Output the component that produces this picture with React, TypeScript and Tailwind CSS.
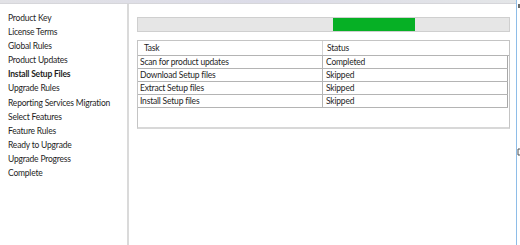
const steps = [
  "Product Key",
  "License Terms",
  "Global Rules",
  "Product Updates",
  "Install Setup Files",
  "Upgrade Rules",
  "Reporting Services Migration",
  "Select Features",
  "Feature Rules",
  "Ready to Upgrade",
  "Upgrade Progress",
  "Complete",
];

const tasks = [
  { task: "Scan for product updates", status: "Completed" },
  { task: "Download Setup files", status: "Skipped" },
  { task: "Extract Setup files", status: "Skipped" },
  { task: "Install Setup files", status: "Skipped" },
];

export default function App() {
  return (
    <div className="flex w-[520px] h-[245px] overflow-hidden bg-white text-[#1e1e1e] font-['Lato',sans-serif] text-[8.5px] tracking-[-0.2px]">
      <div className="flex flex-col w-[516px]">
        {/* window top band */}
        <div className="h-[4px] bg-gradient-to-r from-[#e2e2e6] via-[#dcdce8] to-[#e4e6e8] border-b border-[#d6d6da]" />
        <div className="flex flex-1">
          {/* step list */}
          <nav className="w-[129px] border-r-2 border-[#dadada] pl-2 pt-[7px] flex flex-col">
            {steps.map((s) => (
              <div
                key={s}
                className={`h-[14.1px] leading-[14px] whitespace-nowrap ${
                  s === "Install Setup Files" ? "font-bold" : ""
                }`}
              >
                {s}
              </div>
            ))}
          </nav>

          {/* content */}
          <main className="flex-1 pl-[8px] pr-[6px] pt-[13px]">
            <div className="h-[15px] bg-[#e6e6e6] border border-[#cfcfcf] flex">
              <div className="w-[195px]" />
              <div className="w-[82px] bg-[#06b025]" />
            </div>

            <div className="mt-[8px] h-[89px] border border-[#c4c4c4] border-b-2 border-b-[#d8d8d8] bg-white">
              <div className="flex h-[15px] leading-[14px] border-b border-[#b4b4b4]">
                <div className="w-[185px] pl-[6px] border-r border-[#d4d4d4]">Task</div>
                <div className="pl-[4px]">Status</div>
              </div>
              {tasks.map((t) => (
                <div
                  key={t.task}
                  className="flex h-[13px] leading-[12px] border-b border-[#b4b4b4] mr-[1px]"
                >
                  <div className="w-[185px] pl-[2px] border-r border-[#b4b4b4]">{t.task}</div>
                  <div className="flex-1 pl-[3px] border-r border-[#a8a8a8]">{t.status}</div>
                </div>
              ))}
            </div>
          </main>
        </div>
      </div>

      {/* right window edge */}
      <div className="relative w-[4px] border-l border-[#8ebde8] bg-white">
        <div className="absolute left-[1px] top-[4px] w-[2px] h-[4px] bg-[#6a6a6a]" />
        <svg className="absolute left-0 top-[148px]" width="4" height="8" viewBox="0 0 4 8">
          <path d="M3.5 1 H1 V7 H3.5" fill="none" stroke="#505050" strokeWidth="1" />
        </svg>
      </div>
    </div>
  );
}
